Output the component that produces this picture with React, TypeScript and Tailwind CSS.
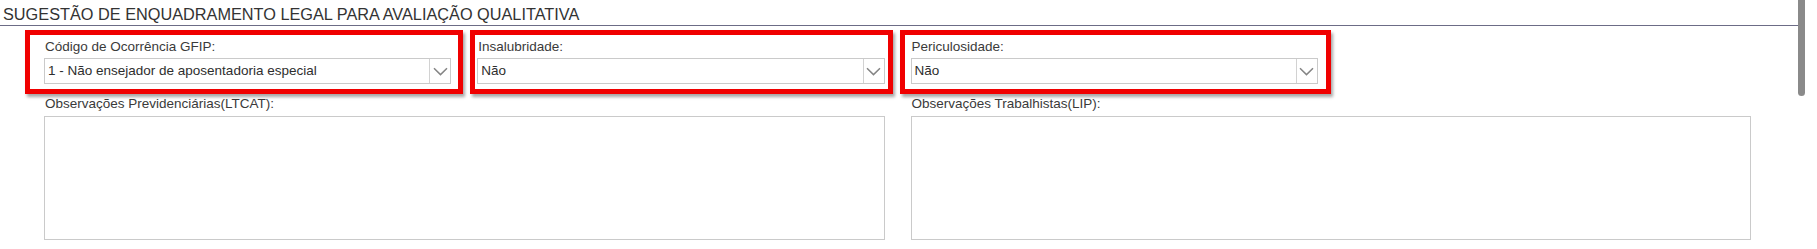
import React from 'react';

const font = { fontFamily: '"Liberation Sans", Arial, sans-serif' };

const Chevron = () => (
  <svg width="15" height="9" viewBox="0 0 15 9" fill="none">
    <path d="M1 1.2 L7.5 7.6 L14 1.2" stroke="#858585" strokeWidth="1.5" />
  </svg>
);

interface SelectFieldProps {
  label: string;
  value: string;
}

const SelectField: React.FC<SelectFieldProps> = ({ label, value }) => (
  <div className="flex flex-col">
    <label className="text-[13.5px] leading-[16px] text-[#3a3a3a] pl-[1px]">{label}</label>
    <div className="mt-[3px] h-[26px] flex border border-[#cacaca] bg-white">
      <div className="flex-1 flex items-center pl-[3px] text-[13.5px] text-[#2e2e2e] truncate">{value}</div>
      <div className="w-[21px] border-l border-[#d2d2d2] flex items-center justify-center">
        <Chevron />
      </div>
    </div>
  </div>
);

const TextAreaField: React.FC<{ label: string }> = ({ label }) => (
  <div className="col-span-2 flex flex-col">
    <label className="text-[13.5px] leading-[16px] text-[#3a3a3a] pl-[1px]">{label}</label>
    <textarea className="mt-[4px] h-[124px] w-full border border-[#cacaca] bg-white resize-none outline-none" />
  </div>
);

// red annotation frames drawn over the form
const marks = [
  { left: 25, width: 438 },
  { left: 470, width: 423 },
  { left: 900, width: 431 },
];

export default function App() {
  return (
    <div className="relative w-[1817px] h-[249px] bg-white overflow-hidden" style={font}>
      <div className="w-[1798px]">
        {/* Section title */}
        <div className="h-[26px] pt-[5px] pl-[3px] border-b border-[#6c6c86] text-[16.3px] leading-[19px] text-[#333] whitespace-nowrap">
          SUGESTÃO DE ENQUADRAMENTO LEGAL PARA AVALIAÇÃO QUALITATIVA
        </div>

        <div className="pl-[44px] pt-[13px]">
          <div className="w-[1707px] grid grid-cols-4 gap-x-[26px] gap-y-[12px]">
            <SelectField label="Código de Ocorrência GFIP:" value="1 - Não ensejador de aposentadoria especial" />
            <SelectField label="Insalubridade:" value="Não" />
            <SelectField label="Periculosidade:" value="Não" />
            <div />
            <TextAreaField label="Observações Previdenciárias(LTCAT):" />
            <TextAreaField label="Observações Trabalhistas(LIP):" />
          </div>
        </div>
      </div>

      {marks.map((m) => (
        <div
          key={m.left}
          className="absolute top-[30px] h-[64px] border-[5px] border-[#f00000] shadow-[2px_3px_3px_rgba(0,0,0,0.35)] pointer-events-none"
          style={{ left: m.left, width: m.width }}
        />
      ))}

      {/* scrollbar thumb */}
      <div className="absolute left-[1798px] top-0 w-[7px] h-[96px] bg-[#8a8a8a] rounded-b-[4px]" />
    </div>
  );
}
